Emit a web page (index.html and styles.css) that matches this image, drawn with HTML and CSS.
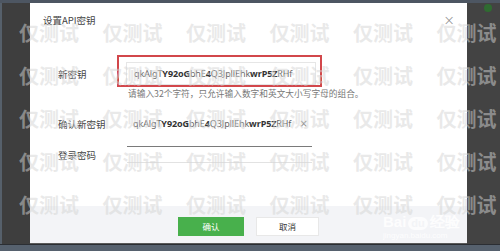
FILE: index.html
```html
<!DOCTYPE html>
<html lang="zh">
<head>
<meta charset="utf-8">
<title>设置API密钥</title>
<link rel="stylesheet" href="styles.css">
</head>
<body>
<div class="screen">
  <div class="topbar"></div>
  <div class="mid">
    <div class="leftbar"></div>
    <div class="dialog">
      <div class="dlg-head">
        <span class="dlg-title">设置API密钥</span>
        <span class="dlg-close">×</span>
      </div>
      <div class="dlg-body">
        <div class="row row-first">
          <span class="label">新密钥</span>
          <div class="input boxed"><span class="key">qkAlgT<b>Y92oG</b>bhE<b>4</b>Q3JpllEhk<b>wrP5Z</b>RHf</span></div>
        </div>
        <div class="hint">请输入32个字符，只允许输入数字和英文大小写字母的组合。</div>
        <div class="row row-second">
          <span class="label">确认新密钥</span>
          <div class="input"><span class="key">qkAlgT<b>Y92oG</b>bhE<b>4</b>Q3JpllEhk<b>wrP5Z</b>RHf</span><span class="clear">×</span></div>
        </div>
        <div class="row row-third">
          <span class="label">登录密码</span>
          <div class="input pwd"></div>
        </div>
        <div class="annot"></div>
      </div>
      <div class="dlg-foot">
        <button class="btn btn-ok">确认</button>
        <button class="btn btn-cancel">取消</button>
      </div>
    </div>
    <div class="rightbar"><span class="dot"></span></div>
  </div>
  <div class="bottombar"></div>
</div>
<div class="watermarks">
  <span>仅测试</span><span>仅测试</span><span>仅测试</span><span>仅测试</span><span>仅测试</span><span>仅测试</span>
  <span>仅测试</span><span>仅测试</span><span>仅测试</span><span>仅测试</span><span>仅测试</span><span>仅测试</span>
  <span>仅测试</span><span>仅测试</span><span>仅测试</span><span>仅测试</span><span>仅测试</span><span>仅测试</span>
  <span>仅测试</span><span>仅测试</span><span>仅测试</span><span>仅测试</span><span>仅测试</span><span>仅测试</span>
  <span>仅测试</span><span>仅测试</span><span>仅测试</span><span>仅测试</span><span>仅测试</span><span>仅测试</span>
</div>
<div class="baidu">
  <div class="baidu-logo">Bai<span class="du">du</span>经验</div>
  <div class="baidu-url">jingyan.baidu.com</div>
</div>
</body>
</html>
```
FILE: styles.css
```css
* { box-sizing: border-box; }
html, body {
  margin: 0;
  width: 500px;
  height: 251px;
  overflow: hidden;
}
body {
  position: relative;
  background: #3f3f3f;
  font-family: "Noto Sans CJK SC", "Noto Sans", sans-serif;
  color: #333;
}
.screen {
  display: flex;
  flex-direction: column;
  height: 251px;
}
.topbar {
  height: 3px;
  background: #4d5662;
}
.mid {
  display: flex;
  height: 241px;
}
.leftbar {
  width: 30px;
  background: #3e3e3e;
  border-left: 2px solid #56606b;
}
.rightbar {
  flex: 1;
  background: #434343;
  position: relative;
}
.dot {
  position: absolute;
  left: 17px;
  top: 1px;
  width: 8px;
  height: 8px;
  border-radius: 50%;
  background: #2f6b31;
}
.bottombar {
  flex: 1;
  background: #56616e;
  border-top: 1px solid #2b2e33;
}
.dialog {
  width: 437px;
  background: #fff;
  display: flex;
  flex-direction: column;
}
.dlg-head {
  height: 34px;
  display: flex;
  align-items: center;
  justify-content: space-between;
  padding: 0 12px 0 13px;
}
.dlg-title {
  font-size: 9.5px;
  color: #444;
}
.dlg-close {
  font-family: "DejaVu Sans", sans-serif;
  font-size: 14px;
  color: #8a8a8a;
  font-weight: 300;
}
.dlg-body {
  position: relative;
  flex: 1;
  padding-left: 28px;
}
.row {
  display: flex;
  align-items: center;
}
.label {
  width: 68px;
  font-size: 9.5px;
  color: #444;
}
.input {
  width: 190px;
  height: 23px;
  display: flex;
  align-items: center;
  padding-left: 7px;
}
.input.boxed {
  border: 1px solid #e6e6e6;
}
.key {
  font-family: "Noto Sans", sans-serif;
  font-size: 9px;
  color: #666;
  letter-spacing: -0.1px;
}
.key b {
  color: #333;
  font-weight: 700;
}
.clear {
  margin-left: 8px;
  font-family: "DejaVu Sans", sans-serif;
  font-size: 10px;
  color: #888;
}
.row-first {
  margin-top: 25px;
}
.hint {
  margin-top: 3px;
  padding-left: 70px;
  font-size: 8.7px;
  line-height: 11px;
  color: #777;
  white-space: nowrap;
}
.row-second {
  margin-top: 13px;
}
.row-third {
  margin-top: 11px;
}
.input.pwd {
  width: 185px;
  height: 17px;
  border-top: 1px solid #7a7a7a;
  border-bottom: 1px solid #e2e2e2;
  margin-left: 1px;
}
.annot {
  position: absolute;
  left: 87px;
  top: 18px;
  width: 205px;
  height: 32px;
  border: 2px solid #d2474b;
}
.dlg-foot {
  height: 38px;
  background: #f3f4f7;
  display: flex;
  justify-content: center;
  align-items: center;
  gap: 12px;
  padding-top: 3px;
  border-bottom: 1px solid #5a5a5a;
}
.btn {
  height: 19px;
  font-family: "Noto Sans CJK SC", sans-serif;
  font-size: 8.5px;
  border: none;
  padding: 0;
}
.btn-ok {
  width: 66px;
  background: #48b04c;
  color: #fff;
}
.btn-cancel {
  width: 63px;
  background: #fff;
  color: #333;
  border: 1px solid #e8e8e8;
}
.watermarks {
  position: absolute;
  left: 19px;
  top: 22px;
  display: grid;
  grid-template-columns: repeat(6, 83.5px);
  grid-auto-rows: 43px;
  pointer-events: none;
}
.watermarks span {
  font-family: "Noto Sans CJK SC", sans-serif;
  font-weight: 700;
  font-size: 20px;
  line-height: 22px;
  color: rgba(212, 212, 212, 0.5);
}
.baidu {
  position: absolute;
  left: 383px;
  top: 214px;
  color: rgba(255, 255, 255, 0.85);
  pointer-events: none;
}
.baidu-logo {
  font-family: "Liberation Sans", sans-serif;
  font-size: 15px;
  line-height: 16px;
  font-weight: 700;
}
.baidu-logo .du {
  display: inline-block;
  margin: 0 2px;
  padding: 0 3px;
  border-radius: 7px;
  background: rgba(255, 255, 255, 0.7);
  color: #f3f4f7;
  font-size: 11px;
  line-height: 13px;
}
.baidu-url {
  font-family: "Liberation Sans", sans-serif;
  font-size: 8px;
  line-height: 10px;
  margin-top: 1px;
}
```
